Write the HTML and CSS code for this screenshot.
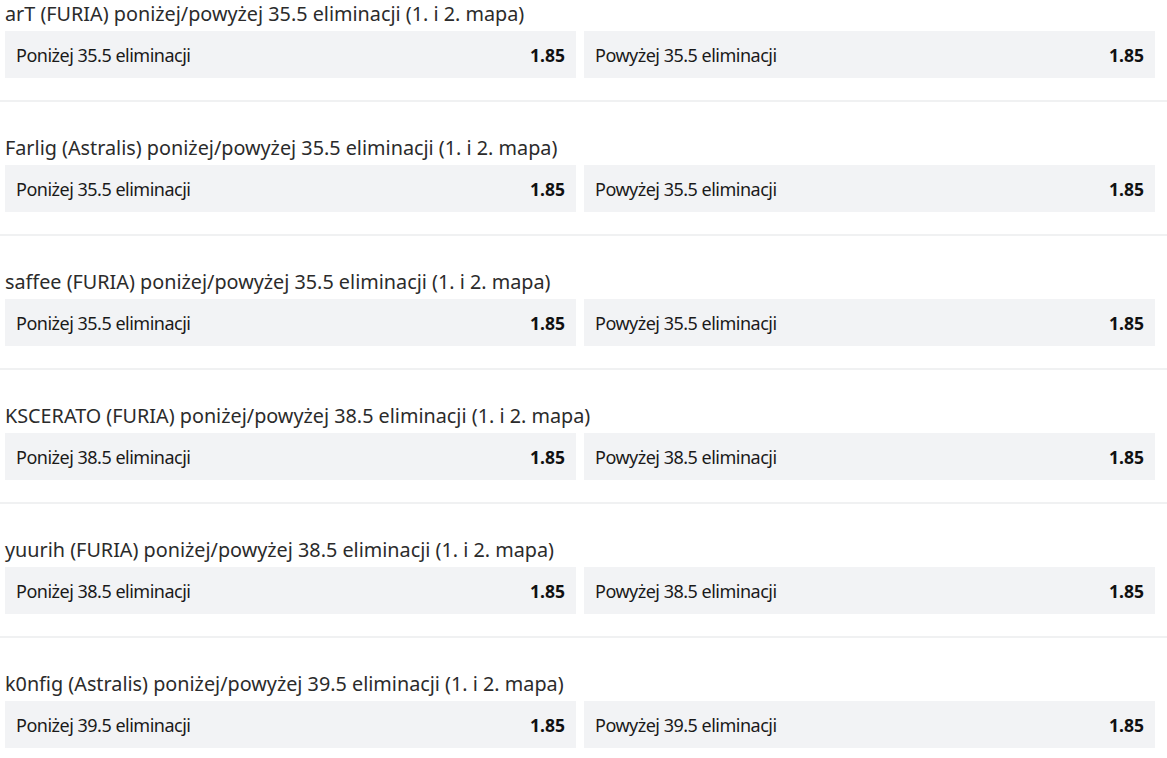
FILE: index.html
```html
<!DOCTYPE html>
<html>
<head>
<title>Eliminacje</title>
<link rel="stylesheet" href="styles.css">
</head>
<body>
  <div id="markets">
    <div class="market">
      <div class="market_title">arT (FURIA) poniżej/powyżej 35.5 eliminacji (1. i 2. mapa)</div>
      <div class="outcomes">
        <div class="outcome"><span class="label">Poniżej 35.5 eliminacji</span><span class="odds">1.85</span></div>
        <div class="outcome"><span class="label">Powyżej 35.5 eliminacji</span><span class="odds">1.85</span></div>
      </div>
    </div>
    <div class="market">
      <div class="market_title">Farlig (Astralis) poniżej/powyżej 35.5 eliminacji (1. i 2. mapa)</div>
      <div class="outcomes">
        <div class="outcome"><span class="label">Poniżej 35.5 eliminacji</span><span class="odds">1.85</span></div>
        <div class="outcome"><span class="label">Powyżej 35.5 eliminacji</span><span class="odds">1.85</span></div>
      </div>
    </div>
    <div class="market">
      <div class="market_title">saffee (FURIA) poniżej/powyżej 35.5 eliminacji (1. i 2. mapa)</div>
      <div class="outcomes">
        <div class="outcome"><span class="label">Poniżej 35.5 eliminacji</span><span class="odds">1.85</span></div>
        <div class="outcome"><span class="label">Powyżej 35.5 eliminacji</span><span class="odds">1.85</span></div>
      </div>
    </div>
    <div class="market">
      <div class="market_title">KSCERATO (FURIA) poniżej/powyżej 38.5 eliminacji (1. i 2. mapa)</div>
      <div class="outcomes">
        <div class="outcome"><span class="label">Poniżej 38.5 eliminacji</span><span class="odds">1.85</span></div>
        <div class="outcome"><span class="label">Powyżej 38.5 eliminacji</span><span class="odds">1.85</span></div>
      </div>
    </div>
    <div class="market">
      <div class="market_title">yuurih (FURIA) poniżej/powyżej 38.5 eliminacji (1. i 2. mapa)</div>
      <div class="outcomes">
        <div class="outcome"><span class="label">Poniżej 38.5 eliminacji</span><span class="odds">1.85</span></div>
        <div class="outcome"><span class="label">Powyżej 38.5 eliminacji</span><span class="odds">1.85</span></div>
      </div>
    </div>
    <div class="market">
      <div class="market_title">k0nfig (Astralis) poniżej/powyżej 39.5 eliminacji (1. i 2. mapa)</div>
      <div class="outcomes">
        <div class="outcome"><span class="label">Poniżej 39.5 eliminacji</span><span class="odds">1.85</span></div>
        <div class="outcome"><span class="label">Powyżej 39.5 eliminacji</span><span class="odds">1.85</span></div>
      </div>
    </div>
  </div>
</body>
</html>
```

FILE: styles.css
```css
body {
  margin: 0;
  background-color: #ffffff;
  font-family: "Noto Sans", sans-serif;
}
.market {
  padding-bottom: 22px;
  border-bottom: 2px solid #f0f1f2;
  margin-bottom: 32px;
}
.market_title {
  height: 31px;
  line-height: 28px;
  padding-left: 5px;
  font-size: 19.8px;
  color: #2b2b2b;
}
.outcomes {
  display: flex;
  gap: 8px;
  padding: 0 12px 0 5px;
}
.outcome {
  flex: 1;
  height: 47px;
  display: flex;
  align-items: center;
  justify-content: space-between;
  padding: 0 11px;
  background-color: #f2f3f5;
  font-size: 18px;
  color: #1a1a1a;
}
.label {
  letter-spacing: -0.5px;
}
.odds {
  font-weight: bold;
  font-size: 17.5px;
  color: #111111;
}
```
